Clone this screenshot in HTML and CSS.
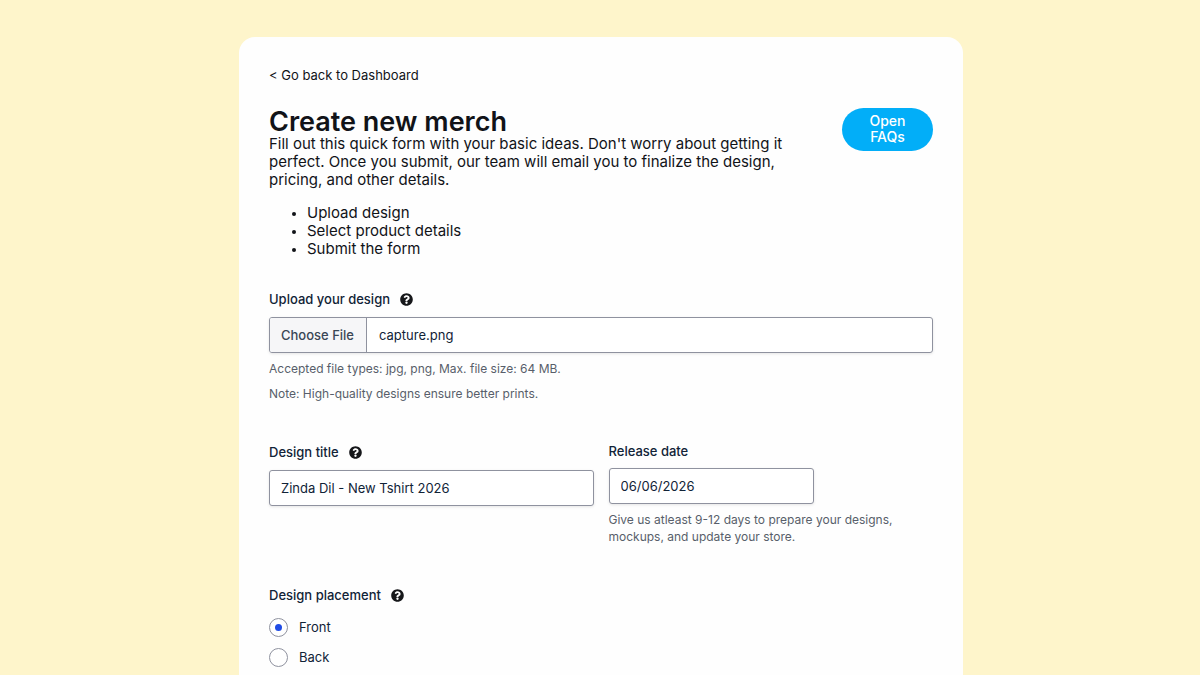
FILE: index.html
```
<!DOCTYPE html>
<html lang="en">
<head>
  <meta charset="UTF-8">
  <meta name="viewport" content="width=device-width, initial-scale=1.0">
  <title>Create new merch</title>
  <link rel="stylesheet" href="styles.css">
</head>
<body>
  <svg class="sprite" aria-hidden="true">
    <symbol id="icon-help" viewBox="0 0 512 512">
      <path fill="currentColor" d="M504 256c0 137-111 248-248 248S8 393 8 256 119 8 256 8s248 111 248 248zM263 90c-55 0-89 23-117 64-3 5-2 12 3 16l35 26c5 4 13 3 17-2 18-23 30-36 57-36 20 0 45 13 45 33 0 15-12 23-33 34-24 13-56 30-56 72v7c0 7 5 12 12 12h56c7 0 12-5 12-12v-1c0-29 84-30 84-109 0-59-61-104-115-104zm-7 248c-26 0-47 21-47 47s21 46 47 46 46-20 46-46-20-47-46-47z"/>
    </symbol>
  </svg>

  <main class="card">
    <a class="back-link" href="#dashboard">&lt; Go back to Dashboard</a>

    <header class="card-header">
      <div class="intro">
        <h1 class="title">Create new merch</h1>
        <p>Fill out this quick form with your basic ideas. Don't worry about getting it perfect. Once you submit, our team will email you to finalize the design, pricing, and other details.</p>
      </div>
      <button type="button" class="btn">Open FAQs</button>
    </header>

    <ul class="steps">
      <li>Upload design</li>
      <li>Select product details</li>
      <li>Submit the form</li>
    </ul>

    <form id="merch-form">
      <div class="form-group">
        <label class="label" for="design-file">Upload your design
          <svg class="help"><use href="#icon-help"/></svg>
        </label>
        <input type="file" id="design-file" class="file-input" accept=".jpg,.png">
        <p class="hint">Accepted file types: jpg, png, Max. file size: 64 MB.</p>
        <p class="hint">Note: High-quality designs ensure better prints.</p>
      </div>

      <div class="form-row">
        <div class="form-group">
          <label class="label label-tall" for="design-title">Design title
            <svg class="help"><use href="#icon-help"/></svg>
          </label>
          <input type="text" id="design-title" class="text-input" value="Zinda Dil - New Tshirt 2026">
        </div>
        <div class="form-group">
          <label class="label" for="release-date">Release date</label>
          <input type="text" id="release-date" class="text-input date-input" value="06/06/2026">
          <p class="hint hint-wrap">Give us atleast 9-12 days to prepare your designs, mockups, and update your store.</p>
        </div>
      </div>

      <fieldset class="form-group">
        <legend class="label">Design placement
          <svg class="help"><use href="#icon-help"/></svg>
        </legend>
        <label class="radio"><input type="radio" name="placement" value="front" checked>Front</label>
        <label class="radio"><input type="radio" name="placement" value="back">Back</label>
      </fieldset>
    </form>
  </main>

  <script>
    const files = new DataTransfer();
    files.items.add(new File([''], 'capture.png', { type: 'image/png' }));
    document.getElementById('design-file').files = files.files;
  </script>
</body>
</html>
```
FILE: styles.css
```
* {
  box-sizing: border-box;
}

body {
  margin: 0;
  padding: 37px 20px 0 22px;
  min-height: 100vh;
  display: flex;
  flex-direction: column;
  align-items: center;
  font-family: 'Inter', sans-serif;
  font-size: 15px;
  line-height: 18px;
  background: #fef5cb;
  color: #111318;
}

p {
  margin: 0;
}

.sprite {
  display: none;
}

.card {
  width: 100%;
  max-width: 724px;
  flex-grow: 1;
  padding: 29px 30px 0;
  background: #fefefe;
  border-radius: 16px 16px 0 0;
}

.back-link {
  color: #111318;
  font-size: 13px;
  text-decoration: none;
}

.card-header {
  display: flex;
  justify-content: space-between;
  align-items: flex-start;
  gap: 40px;
  margin-top: 24px;
}

.intro {
  max-width: 532px;
}

.title {
  margin: 0;
  font-size: 27px;
  line-height: 27px;
  font-weight: 600;
}

.btn {
  width: 91px;
  flex-shrink: 0;
  padding: 5px 20px 6px;
  border: none;
  border-radius: 22px;
  background: #02aef8;
  color: #fff;
  font-family: inherit;
  font-size: 14px;
  font-weight: 500;
  line-height: 16px;
  cursor: pointer;
}

.steps {
  margin: 15px 0 32px;
  padding-left: 38px;
}

.steps li::marker {
  font-size: 12px;
}

.form-group {
  margin: 0;
  padding: 0;
  border: none;
}

.label {
  display: flex;
  align-items: center;
  gap: 10px;
  margin-bottom: 8px;
  padding: 0;
  color: #112337;
  font-size: 13px;
  font-weight: 500;
}

.label-tall {
  line-height: 20px;
}

.help {
  width: 13px;
  height: 13px;
  color: #16171a;
}

.text-input,
.file-input {
  display: block;
  width: 100%;
  height: 36px;
  padding: 0 11px;
  border: 1px solid #8f929f;
  border-radius: 3px;
  background: #fff;
  box-shadow: 0 1px 3px rgba(0, 0, 0, 0.1);
  color: #112337;
  font-family: inherit;
  font-size: 13px;
}

.date-input {
  width: 205px;
}

.file-input {
  padding: 0;
  margin: 9px 0 7px;
  line-height: 34px;
}

.file-input::file-selector-button {
  height: 34px;
  margin: 0 12px 0 0;
  padding: 0 12px 0 11px;
  border: none;
  border-right: 1px solid #8f929f;
  background: #f6f6f8;
  color: #3a4656;
  font-family: inherit;
  font-size: 13px;
  font-weight: 500;
}

.hint {
  margin-bottom: 7px;
  color: #585e6a;
  font-size: 12px;
}

.hint-wrap {
  margin-top: 7px;
  line-height: 17px;
}

.form-row {
  display: grid;
  grid-template-columns: 1fr 1fr;
  gap: 15px;
  margin: 39px 0 34px;
}

.radio {
  display: flex;
  align-items: center;
  gap: 11px;
  height: 30px;
  color: #112337;
  font-size: 13px;
}

.radio input {
  appearance: none;
  display: grid;
  place-items: center;
  width: 19px;
  height: 19px;
  margin: 0;
  border: 1px solid #8f929f;
  border-radius: 50%;
  background: #fff;
}

.radio input:checked::before {
  content: '';
  width: 7px;
  height: 7px;
  border-radius: 50%;
  background: #204ce5;
}

@media (max-width: 640px) {
  .form-row {
    grid-template-columns: 1fr;
  }
}
```
